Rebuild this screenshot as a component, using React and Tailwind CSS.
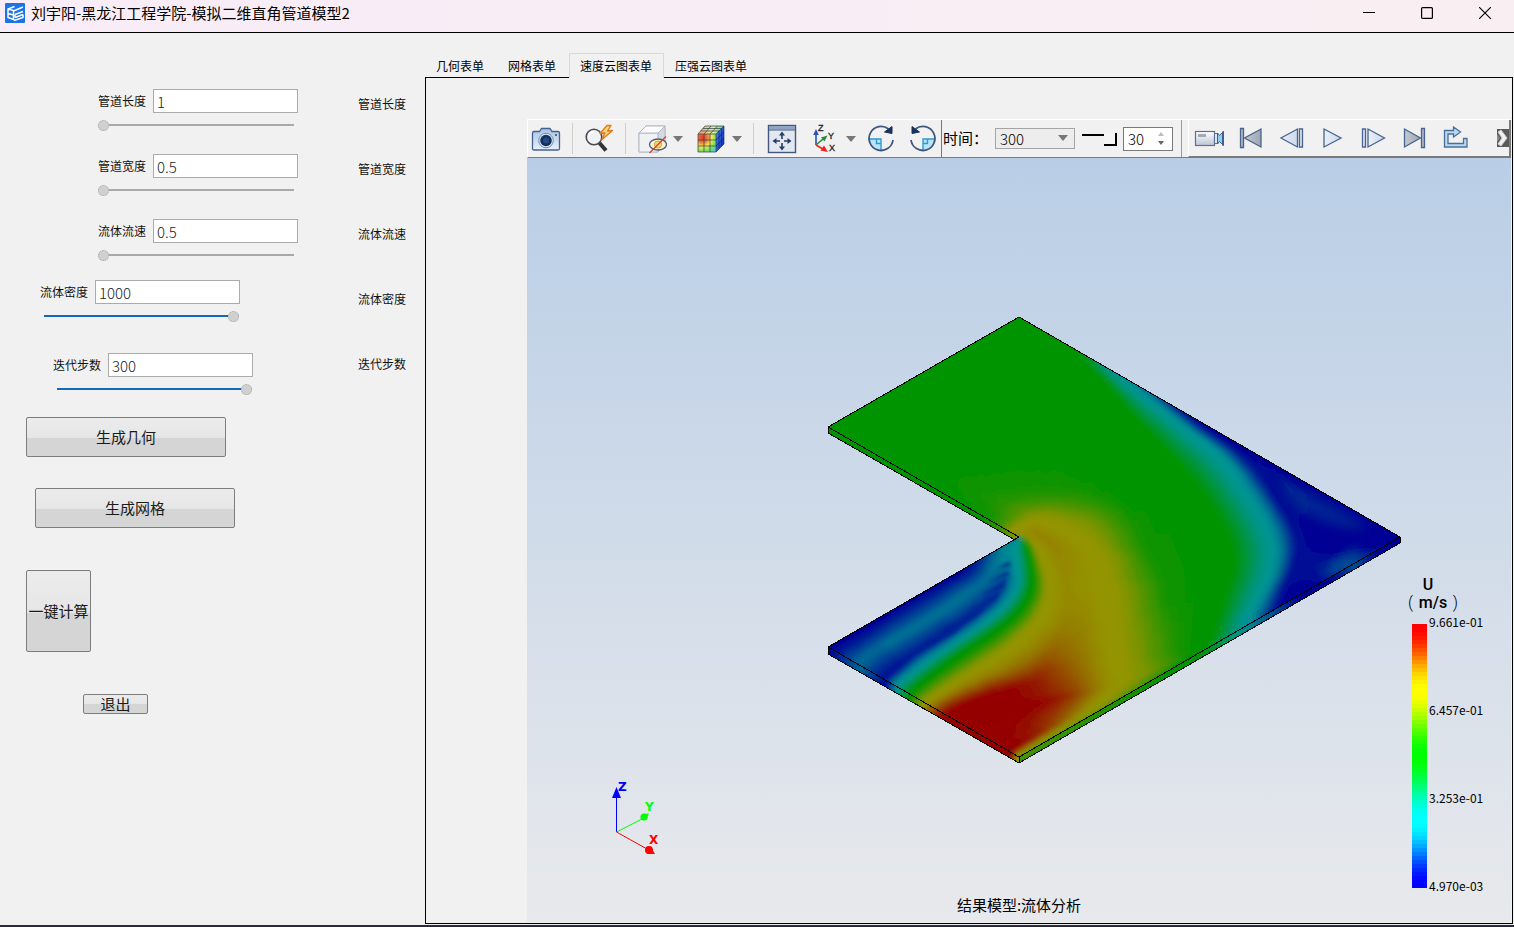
import React from "react";

const FONT = "font-['Noto_Sans_CJK_SC',sans-serif]";

/* ---------- colour scale ---------- */

function scaleColor(value, peak) {
  const v = Math.max(0, Math.min(1, value)) * 4;
  const seg = Math.min(3, Math.floor(v));
  const f = v - seg;
  const s = f * f * (3 - 2 * f);
  const up = Math.round(s * peak);
  const down = peak - up;
  const rgb = [
    [0, up, peak],
    [0, peak, down],
    [up, peak, 0],
    [peak, down, 0],
  ][seg];
  return `rgb(${rgb.join(",")})`;
}

/* ---------- velocity field ---------- */
// Each station crosses the duct from the outer wall to the inner wall: [x, y, speed].
const STATIONS = [
  [[597,50,.5],[597,50,.5],[597,50,.5],[597,50,.5],[592,53,.5],[310,215,.5],[172,295,.5],[92,342,.5],[24,381,.5],[24,381,.5],[24,381,.5],[24,381,.5],[24,381,.5],[24,381,.5],[24,381,.5]],
  [[780,156,.45],[780,156,.45],[780,156,.45],[778,158,.45],[748,172,.5],[482,330,.5],[321,400,.5],[230,440,.5],[172,466,.5],[172,466,.5],[172,466,.5],[172,466,.5],[172,466,.5],[172,466,.5],[172,466,.5]],
  [[872,209,.25],[872,209,.25],[872,209,.25],[868,212,.28],[834,234,.5],[620,400,.5],[459,480,.52],[379,520,.53],[321,552,.52],[321,552,.52],[321,552,.52],[321,552,.52],[321,552,.52],[321,552,.52],[321,552,.52]],
  [[1010,289,.12],[1010,289,.12],[1006,293,.15],[990,303,.25],[930,352,.5],[720,470,.52],[585,550,.55],[515,600,.57],[459,632,.53],[459,632,.53],[459,632,.53],[459,632,.53],[459,632,.53],[459,632,.53],[459,632,.53]],
  [[1147,367,0],[1142,370,0],[1130,378,.08],[1102,391,.25],[1020,450,.5],[830,530,.52],[690,585,.58],[600,630,.64],[530,673,.58],[530,673,.58],[530,673,.58],[530,673,.58],[530,673,.58],[530,673,.58],[530,673,.58]],
  [[1285,447,0],[1268,452,0],[1245,460,.08],[1205,475,.25],[1085,530,.5],[870,578,.53],[735,625,.64],[660,652,.72],[610,672,.75],[570,695,.7],[570,695,.7],[570,695,.7],[570,695,.7],[570,695,.7],[570,695,.7]],
  [[1446,540,0],[1410,560,.06],[1345,565,.05],[1278,575,.25],[1145,605,.5],[940,640,.54],[775,675,.71],[690,693,.77],[650,698,.8],[610,706,.77],[600,711,.5],[598,711,.25],[597,711,.15],[597,711,.15],[597,711,.1]],
  [[1740,710,0],[1503,720,0],[1422,700,.05],[1345,695,.25],[1205,710,.5],[980,735,.55],[825,750,.74],[745,748,.79],[700,745,.8],[650,743,.75],[622,740,.5],[597,740,.3],[580,738,.24],[560,738,.2],[545,741,.17]],
  [[1607,788,.12],[1503,800,.06],[1420,790,.05],[1357,785,.25],[1220,800,.5],[1025,820,.55],[860,835,.74],[795,848,.77],[740,850,.79],[685,858,.75],[637,850,.5],[597,840,.25],[556,838,.12],[500,830,.17],[440,801,.03]],
  [[1469,867,0],[1430,878,0],[1385,870,.05],[1328,870,.25],[1195,890,.5],[1040,910,.56],[880,925,.74],[795,935,.79],[735,948,.8],[662,945,.75],[604,925,.5],[560,912,.25],[518,900,.08],[425,890,.18],[340,859,.02]],
  [[1366,927,.05],[1354,932,.06],[1337,935,.12],[1285,942,.25],[1175,970,.5],[1050,995,.58],[890,1020,.74],[780,1042,.82],[690,1055,.85],[592,1024,.75],[535,988,.5],[492,970,.25],[440,962,.06],[340,948,.18],[240,917,.02]],
  [[1262,987,.22],[1257,990,.25],[1245,993,.28],[1228,1000,.33],[1150,1035,.5],[1050,1062,.59],[900,1090,.74],[780,1115,.84],[650,1130,.92],[500,1090,.75],[440,1052,.5],[400,1032,.25],[345,1028,.05],[245,1005,.18],[150,969,.01]],
  [[1100,1080,.5],[1092,1085,.5],[1080,1090,.51],[1065,1096,.54],[1040,1100,.6],[990,1114,.67],[880,1145,.76],[760,1175,.88],[560,1170,.98],[418,1142,.75],[365,1105,.5],[325,1082,.25],[275,1072,.05],[170,1048,.17],[85,1006,0]],
  [[861,1218,.6],[855,1217,.65],[848,1215,.7],[840,1213,.74],[825,1212,.76],[800,1212,.8],[750,1212,.87],[660,1210,.97],[445,1215,1],[350,1185,.75],[305,1152,.5],[263,1130,.25],[227,1112,.04],[132,1075,.17],[48,1027,0]],
  [[597,1371,.62],[592,1368,.68],[587,1364,.74],[582,1361,.85],[577,1358,.97],[562,1350,1],[516,1324,1],[459,1292,1],[375,1243,.97],[315,1209,.75],[272,1184,.5],[228,1158,.25],[195,1139,.04],[115,1093,.17],[24,1041,0]],
].map((row) => row.map(([x, y, v]) => [820 + x / 3, 300 + y / 3, v]));

const LEVELS = 96;

function catmull(a, b, c, d, t) {
  return a.map((_, n) => {
    const m1 = (c[n] - a[n]) / 2;
    const m2 = (d[n] - b[n]) / 2;
    const t2 = t * t;
    const t3 = t2 * t;
    return (2 * t3 - 3 * t2 + 1) * b[n] + (t3 - 2 * t2 + t) * m1 + (3 * t2 - 2 * t3) * c[n] + (t3 - t2) * m2;
  });
}

function buildField() {
  const along = 8;
  const across = 6;
  const last = STATIONS.length - 1;
  const rows = [];
  for (let j = 0; j < last; j++) {
    for (let s = 0; s < along + (j === last - 1 ? 1 : 0); s++) {
      const nodes = STATIONS[j].map((p, k) =>
        catmull(STATIONS[Math.max(0, j - 1)][k], p, STATIONS[j + 1][k], STATIONS[Math.min(last, j + 2)][k], s / along)
      );
      const row = [];
      for (let k = 0; k < nodes.length - 1; k++) {
        for (let u = 0; u < across; u++) {
          const t = u / across;
          row.push(nodes[k].map((q, n) => q + (nodes[k + 1][n] - q) * t));
        }
      }
      row.push(nodes[nodes.length - 1]);
      rows.push(row);
    }
  }
  const paths = Array.from({ length: LEVELS + 1 }, () => []);
  const pt = (p) => `${p[0].toFixed(1)} ${p[1].toFixed(1)}`;
  for (let r = 0; r < rows.length - 1; r++) {
    for (let c = 0; c < rows[r].length - 1; c++) {
      const q = [rows[r][c], rows[r][c + 1], rows[r + 1][c + 1], rows[r + 1][c]];
      const area = Math.abs((q[2][0] - q[0][0]) * (q[3][1] - q[1][1]) - (q[3][0] - q[1][0]) * (q[2][1] - q[0][1])) / 2;
      if (area < 0.02) continue;
      const v = (q[0][2] + q[1][2] + q[2][2] + q[3][2]) / 4;
      const level = Math.round(Math.max(0, Math.min(1, v)) * LEVELS);
      paths[level].push(`M${pt(q[0])}L${pt(q[1])}L${pt(q[2])}L${pt(q[3])}Z`);
    }
  }
  return paths;
}

const FIELD = buildField();

function EdgeGradient({ id, from, to, stops }) {
  return (
    <linearGradient id={id} gradientUnits="userSpaceOnUse" x1={from[0]} y1={from[1]} x2={to[0]} y2={to[1]}>
      {stops.map(([offset, v]) => (
        <stop key={offset} offset={offset} stopColor={scaleColor(v, 148)} />
      ))}
    </linearGradient>
  );
}

function FieldLayer() {
  return FIELD.map((cells, level) =>
    cells.length ? (
      <path
        key={level}
        d={cells.join("")}
        fill={scaleColor(level / LEVELS, 148)}
        stroke={scaleColor(level / LEVELS, 148)}
        strokeWidth="1"
      />
    ) : null
  );
}

function DuctModel() {
  return (
    <svg viewBox="527 158 984 764" className="absolute inset-0 h-full w-full" role="img" aria-label="速度云图">
      <defs>
        <clipPath id="top-face">
          <path d="M1019 317 1400 537 1019 757 828 647 1019 537 828 427Z" />
        </clipPath>
        <filter id="soften" x="-5%" y="-5%" width="110%" height="110%">
          <feGaussianBlur stdDeviation="2.5" />
        </filter>
        <filter id="haze" x="-50%" y="-50%" width="200%" height="200%">
          <feGaussianBlur stdDeviation="6" />
        </filter>
        <filter id="streak" x="-50%" y="-50%" width="200%" height="200%">
          <feGaussianBlur stdDeviation="1.8" />
        </filter>
        <EdgeGradient id="side-outlet" from={[828, 430]} to={[1019, 540]} stops={[[0, 0.5], [0.8, 0.5], [0.9, 0.6], [1, 0.75]]} />
        <EdgeGradient id="side-inlet" from={[828, 650]} to={[1019, 760]} stops={[[0, 0], [0.17, 0.16], [0.3, 0.04], [0.36, 0.25], [0.43, 0.5], [0.5, 0.75], [0.6, 0.97], [0.95, 1], [0.99, 0.72]]} />
        <EdgeGradient id="side-wall" from={[1019, 760]} to={[1400, 540]} stops={[[0, 0.62], [0.2, 0.58], [0.4, 0.5], [0.48, 0.47], [0.58, 0.28], [0.66, 0.14], [0.74, 0], [0.82, 0.03], [0.88, 0.13], [0.94, 0.02], [1, 0]]} />
      </defs>
      <path d="M828 427 1019 537 1015 540 828 433Z" fill="url(#side-outlet)" />
      <path d="M828 647 1019 757V763L828 654Z" fill="url(#side-inlet)" />
      <path d="M1019 757 1400 537V543L1019 763Z" fill="url(#side-wall)" />
      <g clipPath="url(#top-face)">
        <path d="M1019 317 1210 427 1019 537 828 427Z" fill="#009400" />
        <path d="M1210 427 1400 537 1210 647 1100 590Z" fill="#000094" />
        <path d="M1019 537 1210 647 1019 757 828 647Z" fill="#000094" />
        <FieldLayer />
        <g filter="url(#soften)">
          <FieldLayer />
        </g>
        <path d="M1278 480Q1330 500 1368 528Q1340 532 1300 510Z" fill="#004894" opacity=".5" filter="url(#haze)" />
        <ellipse cx="1343" cy="563" rx="22" ry="6" transform="rotate(-36 1343 563)" fill="#006094" opacity=".7" filter="url(#haze)" />
        <g filter="url(#streak)" fill="#002094" opacity=".6">
          <path d="M1010 561 996 569 1011 566Z" />
          <path d="M1008 571 988 582 1009 575Z" />
          <path d="M1006 580 980 596 1004 588Z" />
          <path d="M1000 592 966 612 996 600Z" />
          <path d="M986 606 944 630 978 616Z" />
          <path d="M964 624 920 648 954 634Z" />
        </g>
      </g>
      <g fill="none" stroke="#000" strokeWidth="1" shapeRendering="crispEdges">
        <path d="M1019 317 1400 537 1019 757 828 647 1019 537 828 427Z" />
        <path d="M828 427V433L1015 540" />
        <path d="M828 647V654L1019 763 1400 543V537M1019 757V763" />
      </g>
    </svg>
  );
}

function AxisTriad() {
  return (
    <svg viewBox="0 0 60 84" className="absolute bottom-[60px] left-[80px] h-[84px] w-[60px]" aria-hidden="true">
      <g fontFamily="'DejaVu Sans',sans-serif" fontWeight="bold" fontSize="12">
        <path d="M9.500 54V18" stroke="#00f" fill="none" />
        <path d="M9.500 9 14 20H5Z" fill="#00f" />
        <path d="M9.500 54 35 41" stroke="#0f0" fill="none" />
        <circle cx="37" cy="39" r="3.600" fill="#0f0" />
        <path d="M36 36 42 35.500 39 42Z" fill="#0f0" />
        <path d="M9.500 54 40 71" stroke="#f00" fill="none" />
        <circle cx="42" cy="72" r="4" fill="#f00" />
        <path d="M43 68 48 76H40Z" fill="#f00" />
        <text x="11" y="13" fill="#00f">Z</text>
        <text x="38" y="33" fill="#0f0">Y</text>
        <text x="42" y="66" fill="#f00">X</text>
      </g>
    </svg>
  );
}

function Legend() {
  const bands = 66;
  return (
    <div className="absolute right-[22px] bottom-[30px] w-[83px] text-black">
      <div className="ml-[2px] w-[50px] font-['Roboto','Noto_Sans_CJK_SC',sans-serif] text-[16px] leading-[18px] font-medium">
        <div className="w-10 text-center">U</div>
        <div className="flex justify-between">
          <span className="font-light">(</span>
          <span>m/s</span>
          <span className="font-light">)</span>
        </div>
      </div>
      <div className="mt-[4px] flex gap-[2px] pl-[6px]">
        <svg viewBox="0 0 15 264" className="mt-[8px] h-[264px] w-[15px] shrink-0" shapeRendering="crispEdges" aria-hidden="true">
          {Array.from({ length: bands }, (_, i) => (
            <rect key={i} x="0" y={i * 4} width="15" height="4" fill={scaleColor(1 - i / (bands - 1), 255)} />
          ))}
        </svg>
        <div className="flex h-[276px] flex-col justify-between text-[12px] leading-[12px]">
          <span>9.661e-01</span>
          <span>6.457e-01</span>
          <span>3.253e-01</span>
          <span>4.970e-03</span>
        </div>
      </div>
    </div>
  );
}

/* ---------- icons ---------- */

const CameraIcon = () => (
  <svg viewBox="0 0 30 26" className="h-[26px] w-[30px]">
    <defs>
      <linearGradient id="cam" x1="0" y1="0" x2="0" y2="1">
        <stop offset="0" stopColor="#a9c3e2" />
        <stop offset="1" stopColor="#e8f1fa" />
      </linearGradient>
    </defs>
    <path d="M3 5.500H8.500L10.500 2.500H19L21 5.500H27Q28.500 5.500 28.500 7V22.500Q28.500 24 27 24H3Q1.500 24 1.500 22.500V7Q1.500 5.500 3 5.500Z" fill="url(#cam)" stroke="#44618f" strokeWidth="1.300" />
    <circle cx="15" cy="14.500" r="7.300" fill="#dfeaf6" stroke="#6f8bb3" />
    <circle cx="15" cy="14.500" r="5.800" fill="#16305f" />
    <circle cx="15" cy="14.500" r="3" fill="#264a86" />
    <circle cx="25" cy="9" r="1" fill="#2c4674" />
  </svg>
);

const PickIcon = () => (
  <svg viewBox="0 0 32 30" className="h-[30px] w-[32px]">
    <circle cx="11" cy="13" r="7.800" fill="#eef1f5" stroke="#4a4a4a" strokeWidth="1.600" />
    <path d="M6 12Q7 8 11 7.500" stroke="#fff" strokeWidth="1.500" fill="none" />
    <path d="M16.500 19 23 26.500" stroke="#333" strokeWidth="4" />
    <path d="M24 1.500 17 9.500 22 9 18.500 16 29.500 6.500 24.500 7 28 1.500Z" fill="#ffd37a" stroke="#dd7a1c" strokeWidth="1.300" strokeLinejoin="round" />
  </svg>
);

const HideIcon = () => (
  <svg viewBox="0 0 30 30" className="h-[30px] w-[30px]">
    <path d="M2 9 9 2H28V21L21 28H2Z" fill="#f0f2f6" stroke="#b3bac6" />
    <path d="M2 9H21L28 2V21L21 28V9Z" fill="#d5dae2" stroke="#b3bac6" />
    <path d="M2 9H21V28H2Z" fill="#eff1f5" stroke="#b3bac6" />
    <path d="M2 9 9 2H28L21 9Z" fill="#fafbfc" stroke="#b3bac6" />
    <ellipse cx="21" cy="20.500" rx="8.500" ry="5.500" fill="#fdf2c4" stroke="#4c5f86" strokeWidth="1.300" />
    <circle cx="21" cy="20.500" r="3.600" fill="#f3d277" stroke="#d3a343" />
    <path d="M12.500 29 29 12.500" stroke="#cf4423" strokeWidth="1.300" />
  </svg>
);

const ContourCubeIcon = () => (
  <svg viewBox="0 0 30 30" className="h-[30px] w-[30px]">
    <defs>
      <radialGradient id="cube-front" cx=".25" cy=".2" r="1">
        <stop offset="0" stopColor="#e5382c" />
        <stop offset=".28" stopColor="#ee7a3a" />
        <stop offset=".5" stopColor="#f6ea4a" />
        <stop offset=".75" stopColor="#7fe05a" />
        <stop offset="1" stopColor="#44cfe0" />
      </radialGradient>
      <linearGradient id="cube-top" x1="0" y1="0" x2="1" y2="0">
        <stop offset="0" stopColor="#f0a377" />
        <stop offset=".6" stopColor="#dff0a0" />
        <stop offset="1" stopColor="#65c987" />
      </linearGradient>
      <linearGradient id="cube-side" x1="0" y1="0" x2="1" y2="1">
        <stop offset="0" stopColor="#4b8fe0" />
        <stop offset="1" stopColor="#0b22b8" />
      </linearGradient>
    </defs>
    <path d="M2 10H20V28H2Z" fill="url(#cube-front)" />
    <path d="M2 10 9 2H28L20 10Z" fill="url(#cube-top)" />
    <path d="M20 10 28 2V20L20 28Z" fill="url(#cube-side)" />
    <path d="M2 10H20V28H2ZM2 10 9 2H28L20 10M8 10V28M14 10V28M2 16H20M2 22H20M8 10 15 2M14 10 21.500 2M4.500 7H23M7 4.500H25.500" fill="none" stroke="#2b3b4d" strokeWidth=".7" />
    <path d="M28 2V20L20 28M23 7V24.500M25.500 4.500V22M20 16 28 8M20 22 28 14" fill="none" stroke="#0c1a6b" strokeWidth=".6" />
  </svg>
);

const FitIcon = () => (
  <svg viewBox="0 0 30 30" className="h-[30px] w-[30px]">
    <rect x="1.500" y="1.500" width="27" height="27" fill="#e3e8f0" stroke="#43587f" strokeWidth="1.400" />
    <path d="M2 2H28V5.500H2Z" fill="#8fa3c4" />
    <path d="M1.500 6H28.500" stroke="#43587f" />
    <path d="M15 7.500 18 11.500H12ZM15 26.500 12 22.500H18ZM5.500 17 9.500 14V20ZM24.500 17 20.500 20V14Z" fill="#253c66" />
    <path d="M15 11V15M15 19V23M9 17H13M17 17H21" stroke="#253c66" strokeWidth="1.600" />
  </svg>
);

const AxesIcon = () => (
  <svg viewBox="0 0 28 30" className="h-[30px] w-[28px]">
    <path d="M5 21V9" stroke="#2d50b5" strokeWidth="1.600" />
    <path d="M5 5 7.800 11H2.200Z" fill="#2d50b5" />
    <path d="M5 21 12 15" stroke="#2a8a43" strokeWidth="1.600" />
    <path d="M16.500 11.500 13.500 17.500 10 13.500Z" fill="#2a8a43" />
    <path d="M5 21 11 24.500" stroke="#e22" strokeWidth="1.600" />
    <path d="M17 28 9.500 26.500 13 21.500Z" fill="#e22" />
    <g fontFamily="'Liberation Sans',sans-serif" fontSize="9" fill="#222" stroke="#222" strokeWidth=".3">
      <text x="7" y="7">Z</text>
      <text x="17" y="15">Y</text>
      <text x="18" y="27">X</text>
    </g>
  </svg>
);

const RotateIcon = ({ flip }) => (
  <svg viewBox="0 0 30 30" className={flip ? "h-[30px] w-[30px] -scale-x-100" : "h-[30px] w-[30px]"}>
    <path d="M3 15H15V27Q5 26 3 15Z" fill="#b9e4fa" />
    <path d="M3 15H15V27M10.500 15V19.500H15" fill="none" stroke="#2b9bd8" strokeWidth="1.400" />
    <path d="M22.500 5A12 12 0 1 0 27 16" fill="none" stroke="#3f557d" strokeWidth="1.800" />
    <path d="M26 2.500V9.500L18.500 8Z" fill="#1b3158" stroke="#1b3158" />
  </svg>
);

const RecordIcon = () => (
  <svg viewBox="0 0 32 20" className="h-[20px] w-[32px]">
    <defs>
      <linearGradient id="rec" x1="0" y1="0" x2="0" y2="1">
        <stop offset="0" stopColor="#fff" />
        <stop offset="1" stopColor="#bcc6d6" />
      </linearGradient>
    </defs>
    <rect x="1.500" y="3.500" width="19" height="14" fill="url(#rec)" stroke="#5c7195" strokeWidth="1.200" />
    <rect x="4" y="6" width="8" height="3" fill="#a5a9b0" />
    <path d="M20.500 5.500H23.500V15.500H20.500Z" fill="#dfe6ef" stroke="#5c7195" />
    <path d="M23.500 5 25.500 7.500 29.500 3.500V17.500L25.500 13.500 23.500 16Z" fill="#8fd0f0" stroke="#3f5f8c" />
    <path d="M28 3.500H30V17.500H28Z" fill="#3f5f8c" />
  </svg>
);

const PLAY_SHAPES = {
  first: ["M2.500 2.500H5.500V21.500H2.500Z", "M23 3V21L6.500 12Z"],
  back: ["M20.500 3H23.500V21H20.500Z", "M18.500 3V21L2 12Z"],
  play: ["M4 3V21L21 12Z"],
  step: ["M1.500 3H4.500V21H1.500Z", "M7 3V21L23.500 12Z"],
  last: ["M19.500 2.500H22.500V21.500H19.500Z", "M2.500 3V21L18.500 12Z"],
};

const PlayIcon = ({ kind }) => {
  const dark = kind === "first" || kind === "last";
  return (
    <svg viewBox="0 0 25 24" className="h-[24px] w-[25px]">
      <defs>
        <linearGradient id={`play-${kind}`}>
          <stop offset="0" stopColor={dark ? "#c3c9d1" : "#e9f0f8"} />
          <stop offset="1" stopColor={dark ? "#9ea6b2" : "#cbd9ea"} />
        </linearGradient>
      </defs>
      {PLAY_SHAPES[kind].map((d) => (
        <path key={d} d={d} fill={`url(#play-${kind})`} stroke="#4a6490" strokeWidth="1.300" />
      ))}
    </svg>
  );
};

const ExportIcon = () => (
  <svg viewBox="0 0 26 24" className="h-[24px] w-[26px]">
    <path d="M1.500 21V4.500H10.500V1L17.500 6 10.500 11V8H5V17.500H20.500V12.500H24V21Z" fill="#bcd7ee" stroke="#4a6f9f" strokeWidth="1.300" />
  </svg>
);

const AppIcon = () => (
  <svg viewBox="0 0 20 20" className="h-5 w-5">
    <rect width="20" height="20" rx="1" fill="#1a73e8" />
    <g fill="none" stroke="#fff" strokeWidth="1.500">
      <path d="M9.500 3.500 3 6V14.500L8.500 16.500V7.500L3 6M3 10.500 8.500 12" />
      <path d="M8.500 8 18 4M10 11.500 18 8.500M10 14.500 18 11.500M9 17.500 18 14.500V11.500M10 11.500V14.500" />
    </g>
  </svg>
);

const Arrow = () => (
  <svg viewBox="0 0 10 6" className="h-[6px] w-[10px]">
    <path d="M0 0H10L5 6Z" fill="#777" />
  </svg>
);

/* ---------- controls ---------- */

function ToolButton({ label, children, className = "" }) {
  return (
    <button type="button" aria-label={label} className={`flex h-9 w-9 shrink-0 items-center justify-center ${className}`}>
      {children}
    </button>
  );
}

function DropButton({ label }) {
  return (
    <button type="button" aria-label={label} className="flex h-9 w-4 shrink-0 items-center justify-center">
      <Arrow />
    </button>
  );
}

const Separator = () => <span className="ml-2 h-[31px] w-px shrink-0 bg-[#cfcfcf]" />;

const THUMB =
  "[&::-webkit-slider-thumb]:appearance-none [&::-webkit-slider-thumb]:-mt-[4px] [&::-webkit-slider-thumb]:size-[11px] [&::-webkit-slider-thumb]:rounded-full [&::-webkit-slider-thumb]:border [&::-webkit-slider-thumb]:border-dotted [&::-webkit-slider-thumb]:border-[#a8a8a8] [&::-webkit-slider-thumb]:bg-[#d0d0d0] [&::-webkit-slider-runnable-track]:h-[2px]";

function Field({ id, label, value, full, className }) {
  return (
    <div className={className}>
      <div className="flex items-center gap-[7px]">
        <label htmlFor={id} className="text-[12px] leading-6 whitespace-nowrap">{label}</label>
        <input
          id={id}
          type="text"
          defaultValue={value}
          className="h-6 w-[145px] border border-[#ababab] bg-white px-[3px] text-[15px] leading-[22px] font-light text-[#1a1a1a] outline-none"
        />
      </div>
      <input
        type="range"
        aria-label={label}
        min="0"
        max="100"
        defaultValue={full ? 100 : 0}
        className={`mt-1 block h-4 appearance-none bg-transparent ${full ? "ml-1 w-[195px] [&::-webkit-slider-runnable-track]:bg-[#1169b8]" : "w-[196px] [&::-webkit-slider-runnable-track]:bg-[#a9a9a9]"} ${THUMB}`}
      />
    </div>
  );
}

function PushButton({ children, className }) {
  return (
    <button
      type="button"
      className={`block rounded-[2px] border border-[#7d7d7d] bg-linear-to-b from-[#ececec] from-0% via-[#e6e6e6] via-52% to-[#d5d5d5] to-52% pb-[2px] text-[15px] leading-none whitespace-nowrap text-[#1a1a1a] ${className}`}
    >
      {children}
    </button>
  );
}

const TABS = ["几何表单", "网格表单", "速度云图表单", "压强云图表单"];
const OUTPUTS = ["管道长度", "管道宽度", "流体流速", "流体密度", "迭代步数"];

export default function App() {
  return (
    <div className={`flex min-h-screen flex-col border-b-2 border-[#2b2a3a] bg-[#f1f1f1] text-[#111] ${FONT}`}>
      <header className="h-[33px] shrink-0 border-b border-black bg-linear-to-r from-[#f8edf8] to-[#f9eef1]">
        <div className="flex h-[26px] items-center pl-[5px]">
          <AppIcon />
          <h1 className="ml-[6px] text-[15px] leading-5 text-black">刘宇阳-黑龙江工程学院-模拟二维直角管道模型2</h1>
          <div className="ml-auto flex text-black">
            <button type="button" aria-label="最小化" className="flex h-[26px] w-[58px] items-center justify-center">
              <svg viewBox="0 0 12 12" className="size-3"><path d="M0 5.500H12" stroke="currentColor" /></svg>
            </button>
            <button type="button" aria-label="最大化" className="flex h-[26px] w-[58px] items-center justify-center">
              <svg viewBox="0 0 12 12" className="size-3"><rect x=".6" y=".6" width="10.800" height="10.800" rx="1" fill="none" stroke="currentColor" strokeWidth="1.200" /></svg>
            </button>
            <button type="button" aria-label="关闭" className="flex h-[26px] w-[58px] items-center justify-center">
              <svg viewBox="0 0 12 12" className="size-3"><path d="M0 0 12 12M12 0 0 12" stroke="currentColor" strokeWidth="1.100" /></svg>
            </button>
          </div>
        </div>
      </header>

      <main className="flex flex-1">
        <aside className="flex w-[425px] shrink-0">
          <form className="w-[358px] pt-14" onSubmit={(e) => e.preventDefault()}>
            <Field id="length" label="管道长度" value="1" className="ml-[98px]" />
            <Field id="width" label="管道宽度" value="0.5" className="mt-[21px] ml-[98px]" />
            <Field id="speed" label="流体流速" value="0.5" className="mt-[21px] ml-[98px]" />
            <Field id="density" label="流体密度" value="1000" full className="mt-[17px] ml-[40px]" />
            <Field id="steps" label="迭代步数" value="300" full className="mt-[29px] ml-[53px]" />
            <PushButton className="mt-5 ml-[26px] h-10 w-[200px]">生成几何</PushButton>
            <PushButton className="mt-[31px] ml-[35px] h-10 w-[200px]">生成网格</PushButton>
            <PushButton className="mt-[42px] ml-[26px] h-[82px] w-[65px]">一键计算</PushButton>
            <PushButton className="mt-[42px] ml-[83px] h-5 w-[65px]">退出</PushButton>
          </form>
          <ul className="pt-[38px] text-[12px]">
            {OUTPUTS.map((name) => (
              <li key={name} className="flex h-[65px] items-center whitespace-nowrap">{name}</li>
            ))}
          </ul>
        </aside>

        <section className="mr-px mb-px flex min-w-0 flex-1 flex-col pt-5">
          <div role="tablist" className="flex h-[25px] shrink-0">
            {TABS.map((name, i) => (
              <button
                key={name}
                type="button"
                role="tab"
                aria-selected={i === 2}
                className={
                  i === 2
                    ? "z-10 h-[25px] border border-b-0 border-[#d9d9d9] bg-[#f1f1f1] pr-[11px] pl-[10px] text-[12px] text-black"
                    : "h-[25px] pr-[13px] pl-[11px] text-[12px] text-black"
                }
              >
                {name}
              </button>
            ))}
          </div>
          <div role="tabpanel" className="-mt-px flex flex-1 flex-col border border-black pt-[41px] pr-px pb-px pl-[101px]">
            <div className="flex h-[39px] shrink-0 items-center border-t border-b border-l border-t-white border-b-[#7a7a7a] border-l-white">
              <ToolButton label="截图"><CameraIcon /></ToolButton>
              <Separator />
              <ToolButton label="拾取" className="ml-2"><PickIcon /></ToolButton>
              <Separator />
              <ToolButton label="显示隐藏" className="ml-2"><HideIcon /></ToolButton>
              <DropButton label="显示隐藏选项" />
              <ToolButton label="云图" className="ml-[7px]"><ContourCubeIcon /></ToolButton>
              <DropButton label="云图选项" />
              <Separator />
              <ToolButton label="适应窗口" className="ml-[10px]"><FitIcon /></ToolButton>
              <ToolButton label="视角" className="ml-[7px]"><AxesIcon /></ToolButton>
              <DropButton label="视角选项" />
              <ToolButton label="顺时针旋转" className="ml-1"><RotateIcon /></ToolButton>
              <ToolButton label="逆时针旋转" className="ml-[6px]"><RotateIcon flip /></ToolButton>
              <span className="h-full w-px shrink-0 bg-[#777]" />
              <label htmlFor="time" className="ml-px w-[45px] shrink-0 text-[15px] whitespace-nowrap text-black">时间：</label>
              <div className="relative ml-[7px] shrink-0">
                <select id="time" defaultValue="300" className="block h-[21px] w-20 appearance-none border border-[#a5a5a5] bg-[#ededed] pl-[4px] text-[15px] leading-none font-light text-black outline-none">
                  <option>300</option>
                </select>
                <span className="pointer-events-none absolute top-[7px] right-[7px]"><Arrow /></span>
              </div>
              <input
                type="range"
                aria-label="帧"
                min="0"
                max="100"
                defaultValue="100"
                className="ml-[7px] h-4 w-[35px] shrink-0 appearance-none bg-transparent [&::-webkit-slider-runnable-track]:-mt-[8px] [&::-webkit-slider-runnable-track]:h-[2px] [&::-webkit-slider-runnable-track]:bg-black [&::-webkit-slider-thumb]:-mt-px [&::-webkit-slider-thumb]:size-[13px] [&::-webkit-slider-thumb]:appearance-none [&::-webkit-slider-thumb]:border-r-2 [&::-webkit-slider-thumb]:border-b-2 [&::-webkit-slider-thumb]:border-black [&::-webkit-slider-thumb]:bg-[#f4f4f4]"
              />
              <div className="ml-[6px] flex h-6 w-[50px] shrink-0 items-center border border-[#7a7a7a] bg-white">
                <input aria-label="帧率" inputMode="numeric" defaultValue="30" className="h-full w-[34px] pl-[4px] text-[15px] leading-none font-light text-black outline-none" />
                <div className="flex flex-col gap-[5px]">
                  <button type="button" aria-label="增加"><svg viewBox="0 0 6 4" className="block h-1 w-1.5"><path d="M0 4H6L3 0Z" fill="#bbb" /></svg></button>
                  <button type="button" aria-label="减少"><svg viewBox="0 0 6 4" className="block h-1 w-1.5"><path d="M0 0H6L3 4Z" fill="#666" /></svg></button>
                </div>
              </div>
              <span className="ml-2 h-full w-px shrink-0 bg-[#9a9a9a]" />
              <div className="ml-[6px] flex h-full min-w-0 flex-1 items-center overflow-hidden border-r-2 border-b border-l border-r-[#7a7a7a] border-b-[#7a7a7a] border-l-white">
                <ToolButton label="录制" className="w-[41px]"><RecordIcon /></ToolButton>
                <ToolButton label="第一帧" className="w-[41px]"><PlayIcon kind="first" /></ToolButton>
                <ToolButton label="上一帧" className="w-[41px]"><PlayIcon kind="back" /></ToolButton>
                <ToolButton label="播放" className="w-[41px]"><PlayIcon kind="play" /></ToolButton>
                <ToolButton label="下一帧" className="w-[41px]"><PlayIcon kind="step" /></ToolButton>
                <ToolButton label="最后一帧" className="w-[41px]"><PlayIcon kind="last" /></ToolButton>
                <ToolButton label="导出" className="w-[41px]"><ExportIcon /></ToolButton>
                <button type="button" aria-label="更多" className="ml-auto">
                  <svg viewBox="0 0 12 18" className="h-[18px] w-[12px]">
                    <rect width="12" height="18" fill="#5a5a5a" />
                    <path d="M1 3 4 1 10 9 4 17 1 15 5 9Z" fill="#f1f1f1" stroke="#c9c9c9" />
                    <path d="M0 5 3 9 0 13Z" fill="#8a8a8a" />
                  </svg>
                </button>
              </div>
            </div>
            <div className="relative min-h-[600px] flex-1 overflow-hidden bg-linear-to-b from-[#b9cee6] to-[#e8e9ec]">
              <DuctModel />
              <AxisTriad />
              <Legend />
              <p className="absolute inset-x-0 bottom-[7px] text-center text-[15px] leading-5 text-black">结果模型:流体分析</p>
            </div>
          </div>
        </section>
      </main>
    </div>
  );
}
